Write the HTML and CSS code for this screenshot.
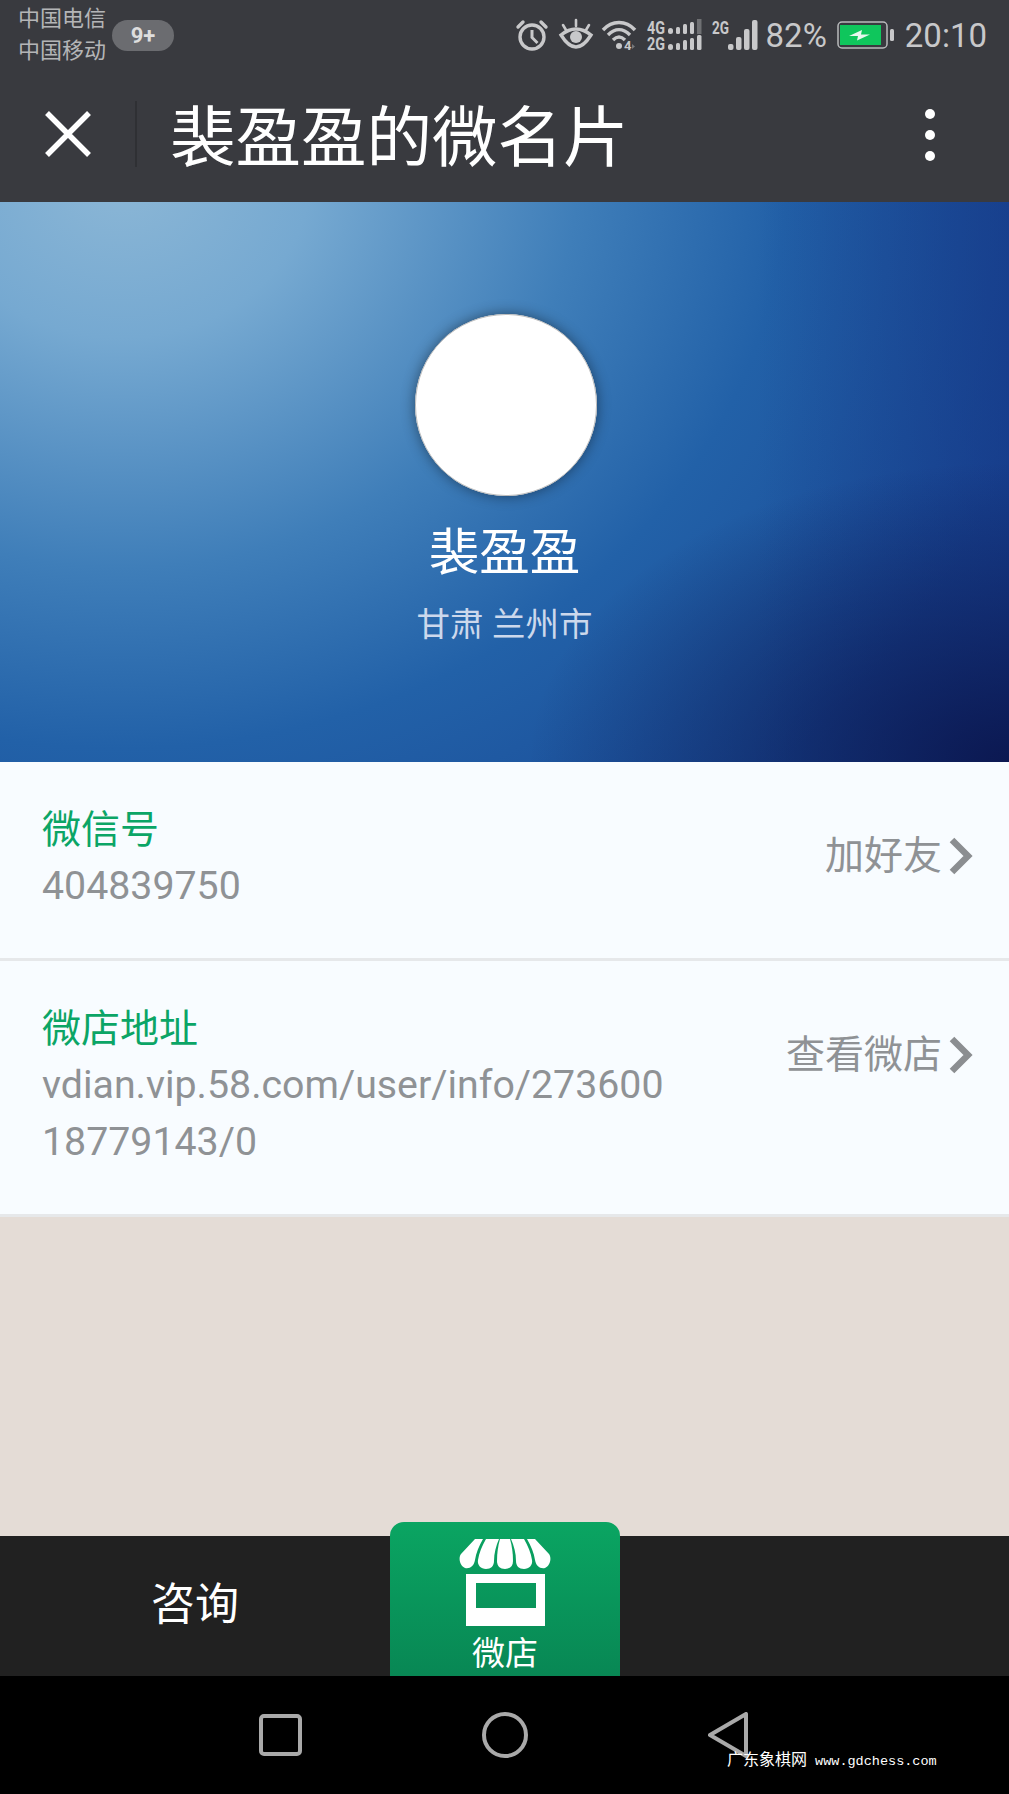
FILE: index.html
```html
<!DOCTYPE html>
<html lang="zh-CN">
<head>
	<title>裴盈盈的微名片</title>
	<meta charset="UTF-8">
	<link rel="stylesheet" href="styles.css">
</head>
<body>
	<div class="page">
		<header class="top">
			<div class="status">
				<div class="carriers">
					<div>中国电信</div>
					<div>中国移动</div>
				</div>
				<span class="badge">9+</span>
				<div class="statusRight">
					<!-- alarm -->
					<svg class="icoAlarm" width="34" height="32" viewBox="0 0 34 32" fill="none" stroke="#c8c8ca">
						<circle cx="17" cy="18" r="12" stroke-width="3.4"/>
						<path d="M17 11v7.500l5.500 5.500" stroke-width="3"/>
						<path d="M3 8l5-5M31 8l-5-5" stroke-width="3.400" stroke-linecap="round"/>
					</svg>
					<!-- eye -->
					<svg class="icoEye" width="34" height="30" viewBox="0 0 34 30" fill="none" stroke="#c8c8ca">
						<path d="M2 15c5 8 10 12 15 12s10-4 15-12c-5-4-10-6-15-6s-10 2-15 6z" stroke-width="3.400"/>
						<circle cx="17" cy="17" r="6" fill="#c8c8ca" stroke="none"/>
						<path d="M17 0v6M4 5l3 5M30 5l-3 5" stroke-width="2.600" stroke-linecap="round"/>
					</svg>
					<!-- wifi -->
					<svg class="icoWifi" width="34" height="30" viewBox="0 0 34 30" fill="none" stroke="#c8c8ca">
						<path d="M1 10C10 0 24 0 33 10" stroke-width="3.400"/>
						<path d="M6 15C13 8 21 8 28 15" stroke-width="3.400"/>
						<path d="M11 20c4-4 8-4 12 0" stroke-width="3.400"/>
						<circle cx="17" cy="26" r="3" fill="#c8c8ca" stroke="none"/>
						<text class="wifi4" x="22" y="30">4</text>
						<path d="M30 24v5l3-2.500z" fill="#77787b" stroke="none"/>
					</svg>
					<!-- double signal -->
					<svg class="icoDual" width="55" height="32" viewBox="0 0 55 32" fill="#c8c8ca">
						<text class="netText" x="0" y="15" textLength="18" lengthAdjust="spacingAndGlyphs">4G</text>
						<text class="netText" x="0" y="31" textLength="18" lengthAdjust="spacingAndGlyphs">2G</text>
						<rect x="21" y="9" width="5" height="6" rx="2.500"/>
						<rect x="29" y="8" width="4" height="7" rx="1.500"/>
						<rect x="36" y="5" width="4" height="10" rx="1.500"/>
						<rect x="43" y="3" width="4" height="12" rx="1.500"/>
						<rect x="50" y="0" width="4.500" height="15" fill="#6f7073"/>
						<rect x="21" y="25" width="5" height="6" rx="2.500"/>
						<rect x="29" y="24" width="4" height="7" rx="1.500"/>
						<rect x="36" y="21" width="4" height="10" rx="1.500"/>
						<rect x="43" y="19" width="4" height="12" rx="1.500"/>
						<rect x="50" y="16" width="4.500" height="15" rx="1.500"/>
					</svg>
					<!-- single signal -->
					<svg class="icoSingle" width="49" height="32" viewBox="0 0 49 32" fill="#c8c8ca">
						<text class="netText" x="0" y="15" textLength="17" lengthAdjust="spacingAndGlyphs">2G</text>
						<rect x="16" y="25" width="5.500" height="6" rx="2"/>
						<rect x="24" y="18" width="5.500" height="13" rx="2"/>
						<rect x="32" y="10" width="5.500" height="21" rx="2"/>
						<rect x="40" y="1" width="5.500" height="30" rx="2"/>
					</svg>
					<span class="pct">82%</span>
					<!-- battery -->
					<svg class="icoBattery" width="58" height="28" viewBox="0 0 58 28">
						<rect x="1" y="1" width="49" height="26" rx="4" fill="none" stroke="#b9babc" stroke-width="1.500"/>
						<rect x="3" y="4" width="41" height="20" fill="#0fc65c"/>
						<path d="M12 15l13-6-1 4.500h9l-13 6 1-4.500z" fill="#e8f8ee"/>
						<rect x="53" y="8" width="4" height="12" rx="1.500" fill="#c8c8ca"/>
					</svg>
					<span class="clock">20:10</span>
				</div>
			</div>
			<nav class="navbar">
				<svg class="close" width="46" height="46" viewBox="0 0 46 46" fill="none" stroke="#fff" stroke-width="5.500">
					<path d="M2 2l42 42M44 2L2 44"/>
				</svg>
				<span class="divider"></span>
				<h1 class="title">裴盈盈的微名片</h1>
				<div class="dots"><i></i><i></i><i></i></div>
			</nav>
		</header>

		<section class="hero">
			<div class="avatar"></div>
			<div class="name">裴盈盈</div>
			<div class="place">甘肃 兰州市</div>
		</section>

		<section class="infoList">
			<div class="row">
				<div class="rowText">
					<div class="label">微信号</div>
					<div class="value">404839750</div>
				</div>
				<a class="action">加好友
					<svg width="24" height="38" viewBox="0 0 24 38" fill="none" stroke="#8b8e91" stroke-width="6.500"><path d="M3 3l16 16L3 35"/></svg>
				</a>
			</div>
			<div class="row">
				<div class="rowText">
					<div class="label">微店地址</div>
					<div class="value">vdian.vip.58.com/user/info/27360018779143/0</div>
				</div>
				<a class="action">查看微店
					<svg width="24" height="38" viewBox="0 0 24 38" fill="none" stroke="#8b8e91" stroke-width="6.500"><path d="M3 3l16 16L3 35"/></svg>
				</a>
			</div>
		</section>

		<div class="filler"></div>

		<footer class="tabbar">
			<div class="tabChat">咨询</div>
			<div class="tabShop">
				<svg width="92" height="90" viewBox="0 0 92 90" fill="#fff">
					<path d="M16 1L2 16c-3 4-1 12 4 14 5 1 9-2 10-8 1-7 4-14 8-21z"/>
					<path d="M27 1c-4 7-7 14-8 21-1 5 3 9 8 9s8-3 8-8c0-8 2-15 5-22z"/>
					<path d="M41 1c-2 7-3 14-3 22 0 5 3 8 8 8s8-3 8-8c0-8-1-15-3-22z"/>
					<path d="M52 1c3 7 5 14 5 22 0 5 3 8 8 8s9-4 8-9c-1-7-4-14-8-21z"/>
					<path d="M68 1c4 7 7 14 8 21 1 6 5 9 10 8 5-2 7-10 4-14L76 1z"/>
					<path fill-rule="evenodd" d="M7 36h79v52H7zM17 45v25h60V45z"/>
				</svg>
				<span class="shopText">微店</span>
			</div>
		</footer>

		<div class="sysNav">
			<svg width="43" height="42" viewBox="0 0 43 42" fill="none" stroke="#a9a9a9" stroke-width="4"><rect x="2" y="2" width="39" height="38" rx="3"/></svg>
			<svg width="46" height="46" viewBox="0 0 46 46" fill="none" stroke="#a9a9a9" stroke-width="4"><circle cx="23" cy="23" r="21"/></svg>
			<svg width="40" height="46" viewBox="0 0 40 46" fill="none" stroke="#a9a9a9" stroke-width="4" stroke-linejoin="round"><path d="M38 2v42L2 23z"/></svg>
			<span class="watermark"><span class="markCn">广东象棋网</span> www.gdchess.com</span>
		</div>
	</div>
</body>
</html>
```

FILE: styles.css
```css
body {
	margin: 0;
	padding: 0;
	font-family: Roboto, "Noto Sans CJK SC", sans-serif;
}
.page {
	position: relative;
	width: 1009px;
	height: 1794px;
	display: flex;
	flex-direction: column;
	overflow: hidden;
	background: #000;
}

/* status bar + nav */
.top {
	background: #393a3f;
	height: 202px;
}
.status {
	height: 70px;
	display: flex;
	align-items: center;
	padding: 0 22px 0 18px;
	color: #c8c8ca;
}
.carriers {
	font-size: 22px;
	line-height: 32px;
	color: #b4b5b7;
}
.badge {
	width: 62px;
	height: 31px;
	margin-left: 6px;
	border-radius: 16px;
	background: #6b6c70;
	color: #dedede;
	font-size: 22px;
	font-weight: 700;
	line-height: 31px;
	text-align: center;
}
.statusRight {
	margin-left: auto;
	display: flex;
	align-items: center;
}
.statusRight svg {
	display: block;
	overflow: visible;
}
.icoAlarm {
	margin-right: 10px;
}
.icoEye {
	margin-right: 9px;
}
.icoWifi {
	margin-right: 11px;
}
.icoDual {
	margin-right: 10px;
}
.icoSingle {
	margin-right: 5px;
}
.netText {
	font-family: Roboto, sans-serif;
	font-size: 19px;
	font-weight: 700;
}
.wifi4 {
	font-family: Roboto, sans-serif;
	font-size: 13px;
	font-weight: 700;
	fill: #c8c8ca;
	stroke: none;
}
.pct {
	font-size: 33px;
	margin-right: 10px;
}
.icoBattery {
	margin-right: 10px;
}
.clock {
	font-size: 33px;
}
.navbar {
	height: 132px;
	display: flex;
	align-items: center;
	padding-left: 45px;
}
.close {
	flex: none;
	margin-top: -4px;
}
.divider {
	width: 2px;
	height: 66px;
	margin: -4px 33px 0 44px;
	background: #2f3034;
}
.title {
	margin: 6px 0 0;
	color: #fff;
	font-size: 65.5px;
	font-weight: 400;
	line-height: 80px;
	flex: 1;
}
.dots {
	display: flex;
	flex-direction: column;
	gap: 11px;
	margin: -2px 74px 0 0;
}
.dots i {
	display: block;
	width: 10px;
	height: 10px;
	border-radius: 50%;
	background: #fff;
}

/* blue card */
.hero {
	height: 560px;
	box-sizing: border-box;
	padding-top: 112px;
	text-align: center;
	background:
		radial-gradient(ellipse 480px 300px at 100% 100%, rgba(10, 20, 75, 0.9), rgba(10, 20, 75, 0)),
		linear-gradient(to right, rgba(20, 50, 130, 0) 75%, rgba(20, 50, 130, 0.55) 100%),
		radial-gradient(ellipse 950px 820px at 12% -5%, #8cb7d6 0%, #76a9d1 20%, #3f7eb9 48%, #2261a8 70%, #1a4c98 100%);
}
.avatar {
	width: 182px;
	height: 182px;
	margin: 0 0 0 415px;
	border-radius: 50%;
	background: #fff;
	box-shadow: 0 0 14px rgba(0, 0, 0, 0.45), inset 0 2px 0 -1px #bbb, inset 0 -2px 0 -1px #bbb, inset 2px 0 0 -1px #bbb, inset -2px 0 0 -1px #bbb;
}
.name {
	margin-top: 27px;
	color: #fff;
	font-size: 50.5px;
	line-height: 60px;
}
.place {
	margin-top: 20px;
	color: #ccd8ec;
	font-size: 33.5px;
	line-height: 44px;
}

/* rows */
.infoList {
	background: #f8fcff;
}
.row {
	display: flex;
	justify-content: space-between;
	align-items: flex-start;
	padding: 40px 36px 43px 42px;
	border-bottom: 3px solid #e6e8ea;
}
.rowText {
	width: 632px;
}
.label {
	color: #0ba566;
	font-size: 39px;
	line-height: 56px;
}
.value {
	color: #8f9295;
	font-size: 39.3px;
	line-height: 57px;
	word-break: break-all;
}
.action {
	display: flex;
	align-items: center;
	gap: 7px;
	margin-top: 26px;
	color: #8f9295;
	font-size: 39px;
	line-height: 56px;
}

.filler {
	flex: 1;
	background: #e4dcd6;
}

/* bottom tabs */
.tabbar {
	height: 140px;
	display: flex;
	background: #212121;
}
.tabChat {
	width: 390px;
	color: #fff;
	font-size: 44px;
	line-height: 138px;
	text-align: center;
}
.tabShop {
	width: 230px;
	height: 154px;
	margin-top: -14px;
	border-radius: 14px 14px 0 0;
	background: linear-gradient(#0aa562, #088754);
	text-align: center;
	color: #fff;
}
.tabShop svg {
	display: block;
	margin: 16px 0 0 69px;
}
.shopText {
	display: block;
	font-size: 33px;
	line-height: 40px;
	margin-top: 6px;
}

/* android keys */
.sysNav {
	height: 118px;
	display: flex;
	align-items: center;
	gap: 180px;
	padding-left: 259px;
	background: #000;
}
.watermark {
	position: absolute;
	left: 727px;
	top: 1751px;
	color: #fff;
	font-family: "Liberation Mono", "Noto Sans CJK SC", monospace;
	font-size: 13.5px;
	line-height: 20px;
	white-space: nowrap;
}
.markCn {
	font-size: 16px;
}
```
